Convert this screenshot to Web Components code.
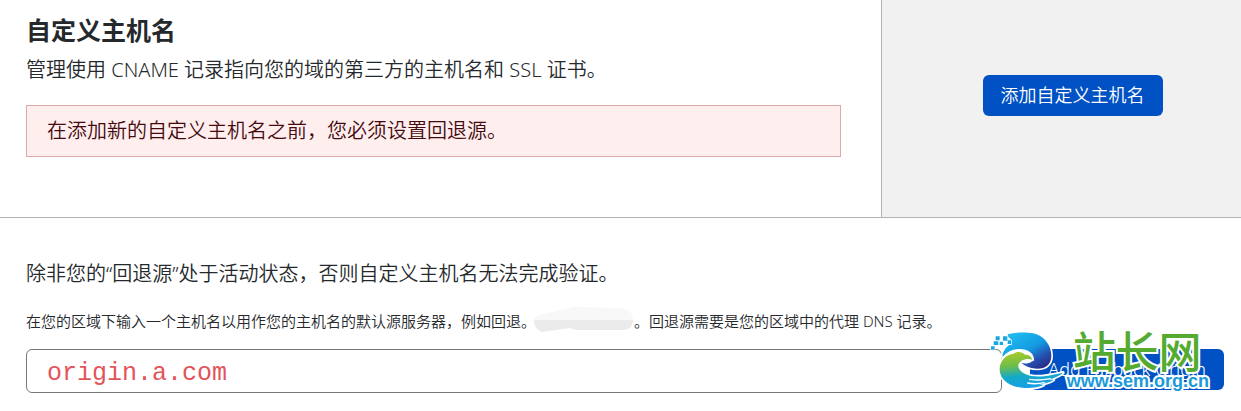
<!DOCTYPE html>
<html lang="zh-CN">
<head>
<meta charset="UTF-8">
<meta name="viewport" content="width=device-width, initial-scale=1">
<title>自定义主机名</title>
<style>
  :root {
    --text: #26292c;
    --line: #b3b3b5;
    --primary: #0051c3;
    --panel: #f1f1f1;
    --danger-bg: #ffeeee;
    --danger-line: #dba9ab;
    --danger-text: #440a0f;
  }

  body {
    margin: 0;
    background: #fff;
    color: var(--text);
    font-family: "Noto Sans", "Noto Sans CJK SC", sans-serif;
    font-weight: 350;
  }
</style>
</head>
<body>
<hostname-card>
  <span slot="title">自定义主机名</span>
  <span slot="description">管理使用 CNAME 记录指向您的域的第三方的主机名和 SSL 证书。</span>
  <alert-box slot="alert">在添加新的自定义主机名之前，您必须设置回退源。</alert-box>
  <primary-button slot="action">添加自定义主机名</primary-button>
</hostname-card>

<fallback-origin value="origin.a.com">
  <span slot="notice">除非您的“回退源”处于活动状态，否则自定义主机名无法完成验证。</span>
  <span slot="hint">在您的区域下输入一个主机名以用作您的主机名的默认源服务器，例如回退。<redacted-text></redacted-text>。回退源需要是您的区域中的代理 DNS 记录。</span>
  <primary-button slot="action">Add Fallback Origin</primary-button>
  <site-mark slot="mark"></site-mark>
</fallback-origin>

<script>
/**
 * Blue action button
 */
class PrimaryButton extends HTMLElement {
  constructor() {
    super();
    this.attachShadow({ mode: 'open' });
    this.shadowRoot.innerHTML = `
      <style>
        :host {
          display: inline-block;
        }

        button {
          display: block;
          padding: 7px 18px 8px;
          border: 0;
          border-radius: 6px;
          background: var(--primary);
          color: #fff;
          font: inherit;
          font-size: 18px;
          line-height: 26px;
          white-space: nowrap;
          cursor: pointer;
        }
      </style>
      <button type="button"><slot></slot></button>
    `;
  }
}

/**
 * Red message box
 */
class AlertBox extends HTMLElement {
  constructor() {
    super();
    this.attachShadow({ mode: 'open' });
    this.shadowRoot.innerHTML = `
      <style>
        :host {
          display: block;
          padding: 10px 20px;
          border: 1px solid var(--danger-line);
          background: var(--danger-bg);
          color: var(--danger-text);
          font-size: 20px;
          line-height: 30px;
        }
      </style>
      <div role="alert"><slot></slot></div>
    `;
  }
}

/**
 * Top card: text on the left, action panel on the right
 */
class HostnameCard extends HTMLElement {
  constructor() {
    super();
    this.attachShadow({ mode: 'open' });
    this.shadowRoot.innerHTML = `
      <style>
        :host {
          display: grid;
          grid-template-columns: 1fr 29%;
          border-bottom: 1px solid var(--line);
        }

        .content {
          padding: 12px 40px 60px 26px;
        }

        h1 {
          margin: 0;
          font-size: 25px;
          font-weight: 700;
          line-height: 36px;
        }

        p {
          margin: 6px 0 19px;
          font-size: 20px;
          line-height: 32px;
        }

        .panel {
          display: flex;
          justify-content: center;
          align-items: flex-start;
          padding: 75px 0 0 22px;
          border-left: 1px solid var(--line);
          background: var(--panel);
        }
      </style>
      <section class="content">
        <h1><slot name="title"></slot></h1>
        <p><slot name="description"></slot></p>
        <slot name="alert"></slot>
      </section>
      <div class="panel"><slot name="action"></slot></div>
    `;
  }
}

/**
 * Smudged out part of a sentence
 */
class RedactedText extends HTMLElement {
  constructor() {
    super();
    this.attachShadow({ mode: 'open' });
    this.shadowRoot.innerHTML = `
      <style>
        :host {
          display: inline-block;
          width: 98px;
          height: 20px;
          vertical-align: middle;
        }

        svg {
          display: block;
          overflow: visible;
        }
      </style>
      <svg width="98" height="20" viewBox="0 0 98 20" aria-hidden="true">
        <path fill="#f8f8f8" d="M-3 9Q-2 2 12 0L38-6 86-5Q98-2 97 9Z"/>
        <path fill="#ebebeb" d="M-2 7H97Q97 17 86 17H40L34 15 6 19Q-2 16-2 7Z"/>
      </svg>
    `;
  }
}

/**
 * Form for the fallback origin
 */
class FallbackOrigin extends HTMLElement {
  constructor() {
    super();
    this.attachShadow({ mode: 'open' });
  }

  connectedCallback() {
    this.render();
  }

  render() {
    this.shadowRoot.innerHTML = `
      <style>
        :host {
          display: block;
          position: relative;
          padding: 41px 17px 18px 26px;
        }

        p {
          margin: 0 0 20px;
          font-size: 20px;
          line-height: 30px;
        }

        label {
          display: block;
          margin-bottom: 15px;
          font-size: 15px;
          line-height: 25px;
        }

        .row {
          display: flex;
          align-items: flex-start;
          gap: 28px;
        }

        input {
          flex: 1;
          min-width: 0;
          box-sizing: border-box;
          height: 44px;
          padding: 4px 20px 0;
          border: 1px solid #77777a;
          border-radius: 6px;
          background: #fff;
          color: #e2555a;
          font-family: "Liberation Mono", monospace;
          font-size: 25px;
        }
      </style>
      <p><slot name="notice"></slot></p>
      <label for="origin"><slot name="hint"></slot></label>
      <div class="row">
        <input id="origin" type="text" value="${this.getAttribute('value') || ''}">
        <slot name="action"></slot>
      </div>
      <slot name="mark"></slot>
    `;
  }
}

/**
 * Site logo that floats over the bottom right corner
 */
class SiteMark extends HTMLElement {
  constructor() {
    super();
    this.attachShadow({ mode: 'open' });
    this.shadowRoot.innerHTML = `
      <style>
        :host {
          position: absolute;
          right: 32px;
          bottom: 18px;
          display: flex;
          align-items: flex-end;
          pointer-events: none;
        }

        svg {
          display: block;
        }

        .name,
        .url {
          display: block;
          -webkit-text-stroke: 4px #fff;
          paint-order: stroke fill;
          white-space: nowrap;
        }

        .name {
          margin-left: 6px;
          color: #54ab30;
          font-family: "Noto Sans CJK SC", sans-serif;
          font-size: 43px;
          font-weight: 500;
          line-height: 40px;
        }

        .url {
          color: #1b9ad8;
          font-family: "Liberation Sans", sans-serif;
          font-size: 18px;
          font-weight: 700;
          line-height: 24px;
        }
      </style>
      <svg width="80" height="66" viewBox="0 0 240 198" aria-hidden="true">
        <defs>
          <linearGradient id="top" x1="0" y1="0" x2="0.8" y2="1">
            <stop offset="0" stop-color="#22c4f2"/>
            <stop offset="0.55" stop-color="#149ae2"/>
            <stop offset="0.8" stop-color="#2450b0"/>
            <stop offset="1" stop-color="#292c86"/>
          </linearGradient>
          <linearGradient id="bottom" x1="0.3" y1="0" x2="0.5" y2="1">
            <stop offset="0" stop-color="#a6ca2b"/>
            <stop offset="0.35" stop-color="#6fbd4a"/>
            <stop offset="0.65" stop-color="#14a9c8"/>
            <stop offset="1" stop-color="#169fe6"/>
          </linearGradient>
        </defs>
        <g stroke="#fff" stroke-width="10" stroke-linejoin="round" paint-order="stroke">
          <path fill="url(#top)" d="M62 22C84 16 106 16 124 17C166 18 192 50 193 84C194 112 176 125 152 125C132 125 114 118 104 108C124 112 138 106 140 92C138 76 118 66 98 66C78 66 60 74 46 90C46 74 56 60 72 50C68 48 66 42 72 36C66 34 62 30 62 22Z"/>
          <path fill="url(#bottom)" d="M38 124C40 100 58 82 80 80C90 72 106 74 114 83C124 82 134 88 136 98C120 92 98 98 94 114C92 132 118 146 142 148C172 150 204 142 228 137C218 146 202 153 184 158L200 158C190 166 172 170 156 171L170 174C154 182 126 184 106 182C66 180 36 156 38 124Z"/>
        </g>
        <path fill="none" stroke="#fff" stroke-width="4" stroke-linecap="round" d="M128 157Q156 162 190 155M122 168Q144 173 172 167"/>
        <path fill="#18a8e4" stroke="#fff" stroke-width="4" paint-order="stroke" d="M26 28h12v12h-12zM48 28h13v13h-13zM20 43h14v11h-14zM38 44h10v10h-10zM62 40h11v11h-11zM12 58h11v10h-11z"/>
      </svg>
      <div>
        <span class="name">站长网</span>
        <span class="url">www.sem.org.cn</span>
      </div>
    `;
  }
}

customElements.define('primary-button', PrimaryButton);
customElements.define('alert-box', AlertBox);
customElements.define('hostname-card', HostnameCard);
customElements.define('redacted-text', RedactedText);
customElements.define('fallback-origin', FallbackOrigin);
customElements.define('site-mark', SiteMark);
</script>
</body>
</html>
